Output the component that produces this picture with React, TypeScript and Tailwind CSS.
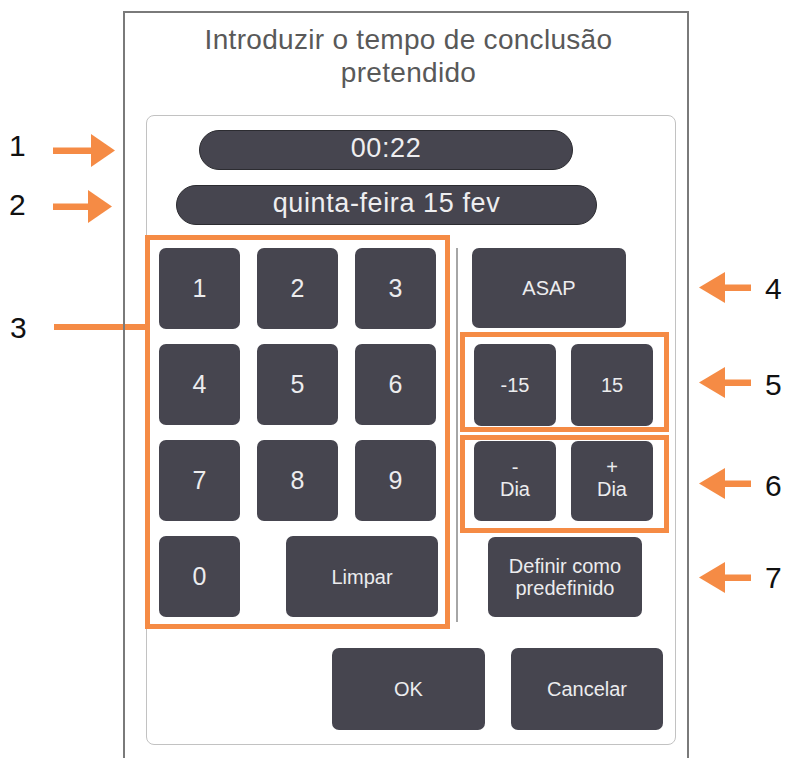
import React from "react";

const ORANGE = "#f58b45";

function ArrowRight({ left, top, lineEnd, width }: { left: number; top: number; lineEnd: number; width: number }) {
  return (
    <svg
      className="absolute"
      style={{ left, top }}
      width={width}
      height={33}
      viewBox={`0 0 ${width} 33`}
    >
      <rect x={0} y={13.5} width={lineEnd + 2} height={6.5} fill={ORANGE} />
      <polygon points={`${lineEnd},0 ${width},16.5 ${lineEnd},33`} fill={ORANGE} />
    </svg>
  );
}

function ArrowLeft({ top }: { top: number }) {
  // tip at x=699, head back at 725, line to 751
  return (
    <svg className="absolute" style={{ left: 699, top }} width={52} height={31} viewBox="0 0 52 31">
      <polygon points="0,15.5 26,0 26,31" fill={ORANGE} />
      <rect x={24} y={12.5} width={28} height={6.5} fill={ORANGE} />
    </svg>
  );
}

function Key({ children, className = "" }: { children: React.ReactNode; className?: string }) {
  return (
    <div
      className={`flex items-center justify-center rounded-[7px] bg-[#46454f] text-center text-[#ececee] ${className}`}
    >
      {children}
    </div>
  );
}

function Num({ n, left, top }: { n: string; left: number; top: number }) {
  return (
    <span
      className="absolute text-[30px] leading-none text-[#111]"
      style={{ left, top, fontFamily: '"Liberation Sans", Arial, sans-serif' }}
    >
      {n}
    </span>
  );
}

export default function App() {
  const digitRows = [
    ["1", "2", "3"],
    ["4", "5", "6"],
    ["7", "8", "9"],
  ];
  return (
    <div
      className="relative h-[758px] w-[788px] overflow-hidden bg-white"
      style={{ fontFamily: '"Liberation Sans", Arial, sans-serif' }}
    >
      {/* annotations */}
      <Num n="1" left={9} top={131} />
      <Num n="2" left={9} top={190} />
      <Num n="3" left={10} top={313} />
      <Num n="4" left={765} top={274} />
      <Num n="5" left={765} top={370} />
      <Num n="6" left={765} top={471} />
      <Num n="7" left={765} top={563} />
      <ArrowRight left={53} top={134} lineEnd={38} width={62} />
      <ArrowRight left={53} top={190} lineEnd={35} width={59} />
      <div className="absolute left-[54px] top-[324px] h-[6px] w-[93px] bg-[#f58b45]" />
      <ArrowLeft top={272} />
      <ArrowLeft top={367} />
      <ArrowLeft top={468} />
      <ArrowLeft top={562} />

      {/* dialog frame */}
      <div className="relative z-10 ml-[123px] mt-[11px] h-[760px] w-[566px] border-x-2 border-t-2 border-[#7a7a7a]">
        <div className="pl-[5px] pt-[10px] text-center text-[28px] leading-[33px] tracking-[0.3px] text-[#595959]">
          Introduzir o tempo de conclusão
          <br />
          pretendido
        </div>

        <div className="ml-[21px] mt-[26px] flex h-[630px] w-[530px] flex-col rounded-[8px] border border-[#c2c2c2] bg-white">
          {/* time pill */}
          <div className="ml-[52px] mt-[14px] flex h-[40px] w-[374px] items-center justify-center rounded-full border border-[#2c2c31] bg-[#46454f] pb-[4px] text-[27px] leading-none tracking-[0.6px] text-[#eeeef0]">
            00:22
          </div>
          {/* date pill */}
          <div className="ml-[29px] mt-[15px] flex h-[40px] w-[421px] items-center justify-center rounded-full border border-[#2c2c31] bg-[#46454f] pb-[4px] text-[27px] leading-none tracking-[0.6px] text-[#eeeef0]">
            quinta-feira 15 fev
          </div>

          {/* middle */}
          <div className="-ml-[2px] mt-[10px] flex">
            {/* keypad */}
            <div className="h-[394px] w-[305px] border-[5px] border-[#f58b45] pl-[9px] pt-[8px]">
              <div className="flex flex-col gap-[15px]">
                {digitRows.map((row) => (
                  <div key={row[0]} className="flex gap-[17px]">
                    {row.map((d) => (
                      <Key key={d} className="h-[81px] w-[81px] text-[25px] leading-none">
                        {d}
                      </Key>
                    ))}
                  </div>
                ))}
                <div className="flex">
                  <Key className="h-[81px] w-[81px] text-[25px] leading-none">0</Key>
                  <Key className="ml-[46px] h-[81px] w-[152px] text-[20px] leading-none">Limpar</Key>
                </div>
              </div>
            </div>

            {/* divider */}
            <div className="ml-[6px] mt-[13px] h-[374px] w-[2px] bg-[#a6a6a6]" />

            {/* right column */}
            <div className="ml-[2px] flex flex-col">
              <Key className="ml-[12px] mt-[13px] h-[80px] w-[154px] text-[20px] leading-none">ASAP</Key>
              <div className="mt-[4px] h-[100px] w-[209px] border-[5px] border-[#f58b45] pl-[9px] pt-[7px]">
                <div className="flex gap-[15px]">
                  <Key className="h-[82px] w-[82px] text-[20px] leading-none">-15</Key>
                  <Key className="h-[82px] w-[82px] text-[20px] leading-none">15</Key>
                </div>
              </div>
              <div className="mt-[3px] h-[98px] w-[209px] border-[5px] border-[#f58b45] pl-[9px] pt-[1px]">
                <div className="flex gap-[15px]">
                  <Key className="h-[80px] w-[82px] pb-[6px] text-[20px] leading-[22px]">
                    <span>
                      -
                      <br />
                      Dia
                    </span>
                  </Key>
                  <Key className="h-[80px] w-[82px] pb-[6px] text-[20px] leading-[22px]">
                    <span>
                      +
                      <br />
                      Dia
                    </span>
                  </Key>
                </div>
              </div>
              <Key className="ml-[28px] mt-[4px] h-[80px] w-[154px] text-[20px] leading-[22px]">
                <span>
                  Definir como
                  <br />
                  predefinido
                </span>
              </Key>
            </div>
          </div>

          {/* bottom buttons */}
          <div className="ml-[185px] mt-[19px] flex gap-[26px]">
            <Key className="h-[82px] w-[153px] text-[20px] leading-none">OK</Key>
            <Key className="h-[82px] w-[152px] text-[20px] leading-none">Cancelar</Key>
          </div>
        </div>
      </div>
    </div>
  );
}
